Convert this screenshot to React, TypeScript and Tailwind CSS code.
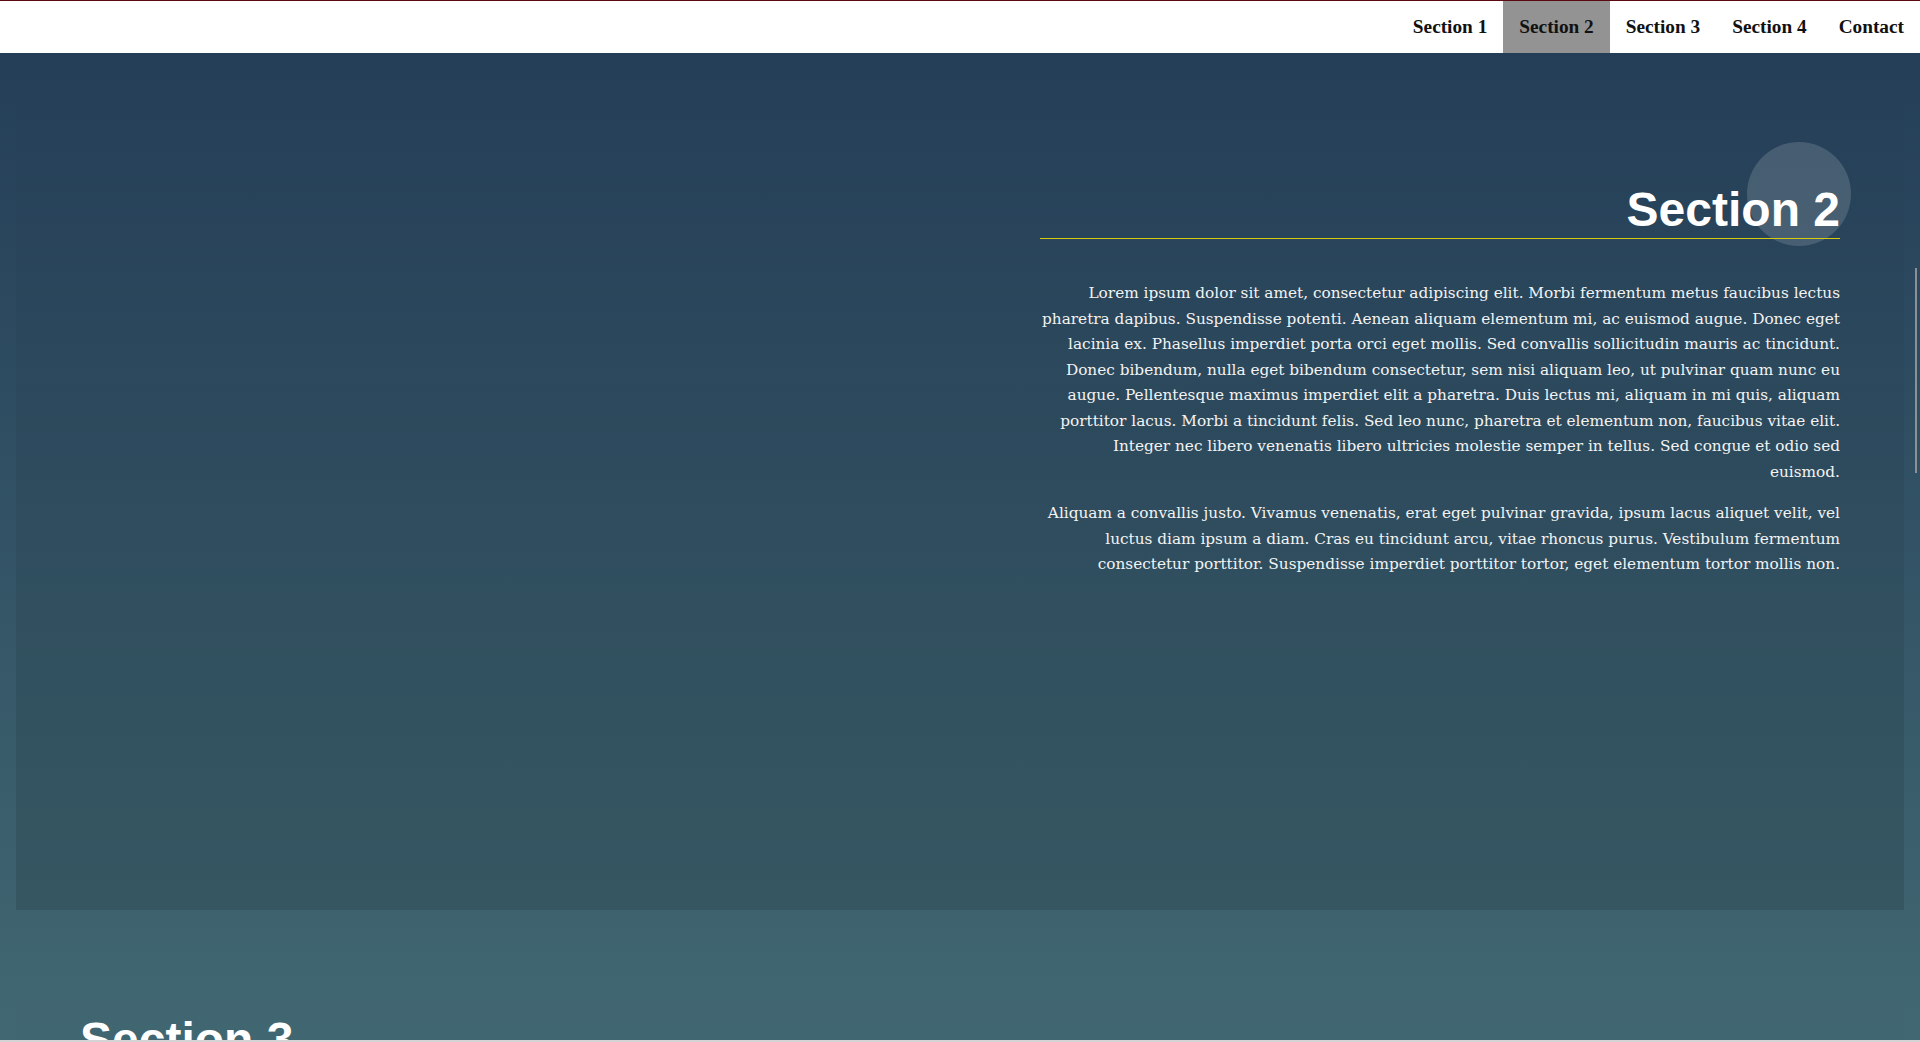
import React from 'react';

const navItems = ['Section 1', 'Section 2', 'Section 3', 'Section 4', 'Contact'];

const paraOne = [
  'Lorem ipsum dolor sit amet, consectetur adipiscing elit. Morbi fermentum metus faucibus lectus',
  'pharetra dapibus. Suspendisse potenti. Aenean aliquam elementum mi, ac euismod augue. Donec eget',
  'lacinia ex. Phasellus imperdiet porta orci eget mollis. Sed convallis sollicitudin mauris ac tincidunt.',
  'Donec bibendum, nulla eget bibendum consectetur, sem nisi aliquam leo, ut pulvinar quam nunc eu',
  'augue. Pellentesque maximus imperdiet elit a pharetra. Duis lectus mi, aliquam in mi quis, aliquam',
  'porttitor lacus. Morbi a tincidunt felis. Sed leo nunc, pharetra et elementum non, faucibus vitae elit.',
  'Integer nec libero venenatis libero ultricies molestie semper in tellus. Sed congue et odio sed',
  'euismod.',
];

const paraTwo = [
  'Aliquam a convallis justo. Vivamus venenatis, erat eget pulvinar gravida, ipsum lacus aliquet velit, vel',
  'luctus diam ipsum a diam. Cras eu tincidunt arcu, vitae rhoncus purus. Vestibulum fermentum',
  'consectetur porttitor. Suspendisse imperdiet porttitor tortor, eget elementum tortor mollis non.',
];

const Lines = ({ lines }: { lines: string[] }) => (
  <>
    {lines.map((l, i) => (
      <span key={i} className="block whitespace-nowrap">
        {l}
      </span>
    ))}
  </>
);

export default function App() {
  return (
    <div className="min-h-screen bg-[#416872] overflow-hidden">
      {/* header */}
      <nav className="flex justify-end bg-white border-t border-[#5a0b10] font-['Liberation_Serif',serif] text-[19.3px] font-bold text-[#111]">
        {navItems.map((item) => (
          <a
            key={item}
            href="#"
            className={`px-4 leading-[52px] ${item === 'Section 2' ? 'bg-[#939393]' : ''}`}
          >
            {item}
          </a>
        ))}
      </nav>

      {/* page body */}
      <div className="px-4 bg-[linear-gradient(to_bottom,#243e58_0px,#416872_987px,#4d7a84_1900px)]">
        {/* section 2 */}
        <section className="h-[857px] pt-[133px] px-16 flex justify-end bg-[linear-gradient(to_bottom,rgba(0,0,0,0),rgba(0,0,0,0.12))]">
          <div className="w-[800px]">
            <div className="relative">
              <div className="absolute -top-[44px] -right-[11px] w-[104px] h-[104px] rounded-full bg-white/15" />
              <h2 className="relative text-right font-['Liberation_Sans',Arial,sans-serif] text-[48px] font-bold leading-none text-white pb-[4px] border-b border-[#d6cc0c]">
                Section 2
              </h2>
            </div>
            <div className="mt-[42px] text-right font-['DejaVu_Serif',serif] text-[15.3px] leading-[25.5px] text-[#f3f3f3]">
              <p className="mb-4">
                <Lines lines={paraOne} />
              </p>
              <p>
                <Lines lines={paraTwo} />
              </p>
            </div>
          </div>
        </section>

        {/* section 3 */}
        <section className="h-[867px] mt-[50px] pt-[56px] px-16 bg-[linear-gradient(to_bottom,rgba(0,0,0,0),rgba(0,0,0,0.12))]">
          <div className="w-[800px]">
            <h2 className="font-['Liberation_Sans',Arial,sans-serif] text-[48px] font-bold leading-none text-white pb-[4px] border-b border-[#d6cc0c]">
              Section 3
            </h2>
          </div>
        </section>
      </div>

      {/* overlay scrollbar thumb + bottom strip */}
      <div className="fixed right-[3px] top-[268px] h-[205px] w-[2px] bg-[#8c9196]" />
      <div className="fixed bottom-0 left-0 h-[2px] w-full bg-[#d4d4d4]" />
    </div>
  );
}
